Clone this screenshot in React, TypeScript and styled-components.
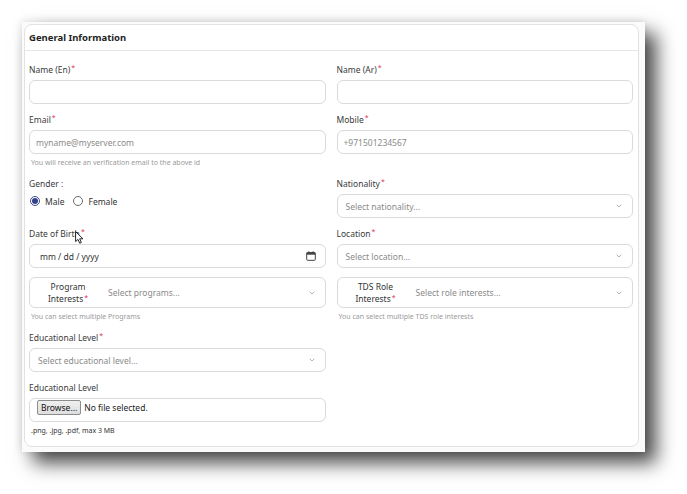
import React from "react";
import styled, { createGlobalStyle } from "styled-components";
import { ChevronDown } from "lucide-react";

const GlobalStyle = createGlobalStyle`
  html, body {
    margin: 0;
    padding: 0;
    background: #ffffff;
  }
  body {
    font-family: "Noto Sans", "Open Sans", sans-serif;
    color: #333333;
  }
  * {
    box-sizing: border-box;
  }
`;

const Page = styled.div`
  min-height: 494px;
  padding: 22px 0 0 22px;
`;

const Frame = styled.div`
  width: 623px;
  height: 430px;
  background: #fbfbfb;
  padding: 2px 6px 5px 2px;
  display: flex;
  box-shadow: 11px 11px 18px rgba(0, 0, 0, 0.72), -1px -1px 8px rgba(0, 0, 0, 0.1);
`;

const Card = styled.div`
  flex: 1;
  background: #ffffff;
  border: 1px solid #e2e2e2;
  border-radius: 8px;
  display: flex;
  flex-direction: column;
`;

const CardHeader = styled.div`
  height: 26px;
  padding: 0 4px;
  display: flex;
  align-items: center;
  border-bottom: 1px solid #e6e6e6;
  font-size: 9.5px;
  font-weight: 700;
  color: #1f1f1f;
`;

const Body = styled.div`
  padding: 12px 5px 0 4px;
  display: grid;
  grid-template-columns: 1fr 1fr;
  column-gap: 11px;
  row-gap: 9px;
  align-items: start;
`;

const Field = styled.div`
  display: flex;
  flex-direction: column;
`;

const Label = styled.label`
  position: relative;
  height: 13px;
  line-height: 13px;
  margin-bottom: 4px;
  font-size: 8.5px;
  color: #3a3a3a;
`;

const Req = styled.span`
  color: #e0345a;
  font-size: 7px;
  margin-left: 1px;
  vertical-align: top;
  line-height: 10px;
`;

const TextInput = styled.input`
  height: 24px;
  width: 100%;
  border: 1px solid #dadada;
  border-radius: 6px;
  padding: 0 6px;
  font-family: inherit;
  font-size: 8.5px;
  color: #333;
  background: #fff;
  outline: none;

  &::placeholder {
    color: #8a8a8a;
  }
`;

const Control = styled.div<{ $pad?: number }>`
  height: 24px;
  border: 1px solid #dadada;
  border-radius: 6px;
  padding: 0 9px 0 ${(p) => p.$pad ?? 8}px;
  display: flex;
  align-items: center;
  justify-content: space-between;
  font-size: 8.5px;
  background: #fff;
`;

const Placeholder = styled.span<{ $dark?: boolean }>`
  color: ${(p) => (p.$dark ? "#333" : "#8a8a8a")};
`;

const Help = styled.div<{ $dark?: boolean }>`
  margin-top: 3px;
  height: 11px;
  line-height: 11px;
  font-size: 7px;
  padding-left: 2px;
  color: ${(p) => (p.$dark ? "#333" : "#9a9a9a")};
`;

const RadioRow = styled.div`
  display: flex;
  align-items: center;
  height: 12px;
  margin-top: 1px;
  padding-left: 1px;
  gap: 9px;
`;

const RadioOption = styled.span`
  display: flex;
  align-items: center;
  gap: 5px;
  font-size: 8.5px;
  color: #333;
`;

const RadioDot = styled.span<{ $checked?: boolean }>`
  width: 10px;
  height: 10px;
  border-radius: 50%;
  border: 1px solid ${(p) => (p.$checked ? "#3c4a8c" : "#6b6b6b")};
  display: flex;
  align-items: center;
  justify-content: center;

  &::after {
    content: "";
    width: 6px;
    height: 6px;
    border-radius: 50%;
    background: ${(p) => (p.$checked ? "#34418a" : "transparent")};
  }
`;

const MultiBox = styled.div`
  height: 31px;
  border: 1px solid #dadada;
  border-radius: 6px;
  display: flex;
  align-items: center;
  padding-right: 9px;
  font-size: 8.5px;
  background: #fff;
`;

const MultiLabel = styled.div`
  width: 76px;
  text-align: center;
  line-height: 12px;
  color: #333;
`;

const MultiValue = styled.span`
  flex: 1;
  padding-left: 2px;
  color: #8a8a8a;
`;

const FileBox = styled.div`
  height: 24px;
  border: 1px solid #dadada;
  border-radius: 6px;
  padding: 1px 0 0 7px;
  display: flex;
  align-items: flex-start;
  gap: 3px;
  font-size: 8.5px;
  color: #222;
`;

const BrowseButton = styled.span`
  height: 15px;
  padding: 0 3px;
  border: 1px solid #8c8c8c;
  border-radius: 2px;
  background: linear-gradient(#efefef, #dedede);
  display: flex;
  align-items: center;
  font-size: 8.5px;
  color: #111;
`;

const FileText = styled.span`
  line-height: 15px;
`;

const Cursor = styled.svg`
  position: absolute;
  left: 46px;
  top: 4px;
`;

const Chevron = () => <ChevronDown size={8} strokeWidth={1.6} color="#6f6f6f" />;

const CalendarIcon = () => (
  <svg width="10" height="10" viewBox="0 0 10 10">
    <rect x="2.3" y="0.3" width="1.1" height="2" fill="#444" />
    <rect x="6.6" y="0.3" width="1.1" height="2" fill="#444" />
    <rect x="0.7" y="1.5" width="8.6" height="7.8" rx="0.8" fill="none" stroke="#444" strokeWidth="1" />
    <rect x="0.7" y="1.5" width="8.6" height="2.2" fill="#444" />
  </svg>
);

const App: React.FC = () => {
  return (
    <>
      <GlobalStyle />
      <Page>
        <Frame>
          <Card>
            <CardHeader>General Information</CardHeader>
            <Body>
              <Field>
                <Label>
                  Name (En)<Req>*</Req>
                </Label>
                <TextInput />
              </Field>
              <Field>
                <Label>
                  Name (Ar)<Req>*</Req>
                </Label>
                <TextInput />
              </Field>

              <Field>
                <Label>
                  Email<Req>*</Req>
                </Label>
                <TextInput placeholder="myname@myserver.com" />
                <Help>You will receive an verification email to the above id</Help>
              </Field>
              <Field>
                <Label>
                  Mobile<Req>*</Req>
                </Label>
                <TextInput placeholder="+971501234567" />
              </Field>

              <Field>
                <Label>Gender :</Label>
                <RadioRow>
                  <RadioOption>
                    <RadioDot $checked />
                    Male
                  </RadioOption>
                  <RadioOption>
                    <RadioDot />
                    Female
                  </RadioOption>
                </RadioRow>
              </Field>
              <Field>
                <Label>
                  Nationality<Req>*</Req>
                </Label>
                <Control>
                  <Placeholder>Select nationality...</Placeholder>
                  <Chevron />
                </Control>
              </Field>

              <Field>
                <Label>
                  Date of Birth<Req>*</Req>
                  <Cursor width="9" height="13" viewBox="0 0 9 13">
                    <path
                      d="M0.6 0.6 L0.6 10.6 L3 8.4 L4.7 12.2 L6.3 11.5 L4.7 7.8 L7.9 7.8 Z"
                      fill="#fff"
                      stroke="#111"
                      strokeWidth="0.9"
                      strokeLinejoin="round"
                    />
                  </Cursor>
                </Label>
                <Control $pad={10}>
                  <Placeholder $dark>mm / dd / yyyy</Placeholder>
                  <CalendarIcon />
                </Control>
              </Field>
              <Field>
                <Label>
                  Location<Req>*</Req>
                </Label>
                <Control>
                  <Placeholder>Select location...</Placeholder>
                  <Chevron />
                </Control>
              </Field>

              <Field>
                <MultiBox>
                  <MultiLabel>
                    Program
                    <br />
                    Interests<Req>*</Req>
                  </MultiLabel>
                  <MultiValue>Select programs...</MultiValue>
                  <Chevron />
                </MultiBox>
                <Help>You can select multiple Programs</Help>
              </Field>
              <Field>
                <MultiBox>
                  <MultiLabel>
                    TDS Role
                    <br />
                    Interests<Req>*</Req>
                  </MultiLabel>
                  <MultiValue>Select role interests...</MultiValue>
                  <Chevron />
                </MultiBox>
                <Help>You can select multiple TDS role interests</Help>
              </Field>

              <Field>
                <Label>
                  Educational Level<Req>*</Req>
                </Label>
                <Control>
                  <Placeholder>Select educational level...</Placeholder>
                  <Chevron />
                </Control>
              </Field>
              <div />

              <Field>
                <Label>Educational Level</Label>
                <FileBox>
                  <BrowseButton>Browse...</BrowseButton>
                  <FileText>No file selected.</FileText>
                </FileBox>
                <Help $dark>.png, .jpg, .pdf, max 3 MB</Help>
              </Field>
              <div />
            </Body>
          </Card>
        </Frame>
      </Page>
    </>
  );
};

export default App;
